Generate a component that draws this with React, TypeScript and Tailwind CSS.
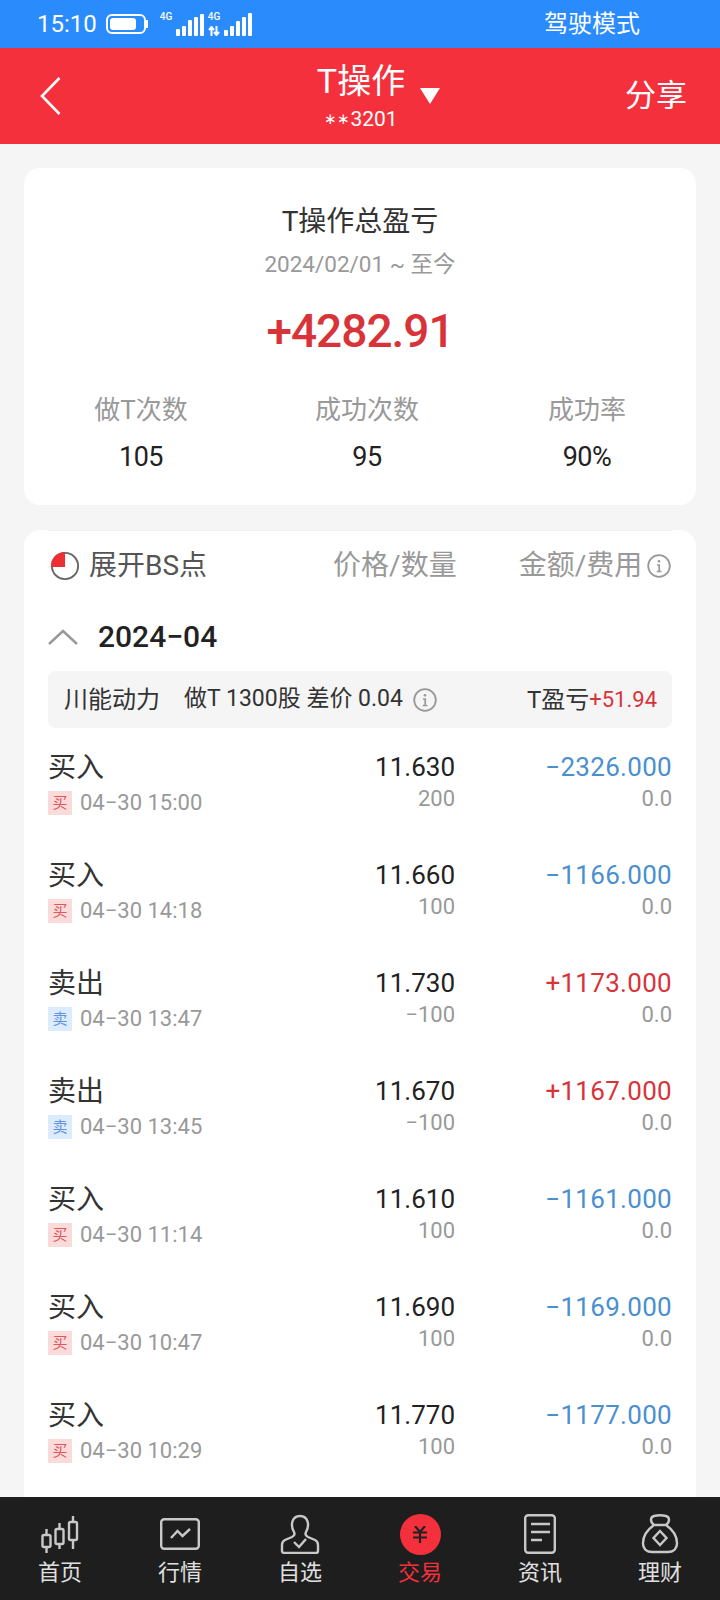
import React from "react";

const font = { fontFamily: 'Roboto, "Noto Sans CJK SC", sans-serif' };

const rows = [
  { t: "买入", d: "04−30 15:00", p: "11.630", q: "200", a: "−2326.000" },
  { t: "买入", d: "04−30 14:18", p: "11.660", q: "100", a: "−1166.000" },
  { t: "卖出", d: "04−30 13:47", p: "11.730", q: "−100", a: "+1173.000" },
  { t: "卖出", d: "04−30 13:45", p: "11.670", q: "−100", a: "+1167.000" },
  { t: "买入", d: "04−30 11:14", p: "11.610", q: "100", a: "−1161.000" },
  { t: "买入", d: "04−30 10:47", p: "11.690", q: "100", a: "−1169.000" },
  { t: "买入", d: "04−30 10:29", p: "11.770", q: "100", a: "−1177.000" },
];

function Info({ size, color }: { size: number; color: string }) {
  return (
    <svg width={size} height={size} viewBox="0 0 24 24" fill="none" stroke={color} strokeWidth="1.8">
      <circle cx="12" cy="12" r="10.8" />
      <circle cx="12" cy="7.2" r="1.3" fill={color} stroke="none" />
      <path d="M10 11h2.2v6.5M9.8 17.5h4.6" strokeWidth="1.7" />
    </svg>
  );
}

function Signal({ hs, dual }: { hs: number[]; dual?: boolean }) {
  return (
    <div className="flex h-[24px] items-end">
      <div className="flex h-[24px] w-[16px] flex-col justify-between">
        <span className="text-[10px] font-medium leading-[10px] text-white">4G</span>
        {dual && (
          <svg width="12" height="10" viewBox="0 0 12 10" fill="none" stroke="white" strokeWidth="2">
            <path d="M3.5 10V2M1 4l2.5-3L6 4M8.5 0v8M6 6l2.5 3L11 6" />
          </svg>
        )}
      </div>
      <div className="flex items-end gap-[2px]">
        {hs.map((h, i) => (
          <span key={i} className="w-[4px] rounded-[1px] bg-white" style={{ height: h }} />
        ))}
      </div>
    </div>
  );
}

function NavIcon({ k }: { k: number }) {
  const s = { fill: "none", stroke: "#c8c8c8", strokeWidth: 2.4 };
  if (k === 0)
    return (
      <svg width="38" height="37" viewBox="0 0 38 37" {...s}>
        <path d="M5.5 13v6M5.5 31v6M18.5 7v6M18.5 28v5M32 0v6M32 24v9" />
        <rect x="1.5" y="19" width="8" height="12" rx="1.5" />
        <rect x="14.5" y="13" width="8" height="15" rx="1.5" />
        <rect x="28" y="6" width="8" height="18" rx="1.5" />
      </svg>
    );
  if (k === 1)
    return (
      <svg width="40" height="32" viewBox="0 0 40 32" {...s}>
        <rect x="1.2" y="1.2" width="37.6" height="29.6" rx="3" />
        <path d="M11 20l6.5-7 5 5 7.5-7" />
      </svg>
    );
  if (k === 2)
    return (
      <svg width="40" height="40" viewBox="0 0 40 40" {...s}>
        <path d="M14 18c-4-7-2-16 6-16s10 9 6 16c-1 2 0 4 2 5l7 3c2 1 3 3 3 5v6c0 1-1 2-2 2H4c-1 0-2-1-2-2v-6c0-2 1-4 3-5l7-3c2-1 3-3 2-5z" />
        <path d="M14 28l5 5 7-8" />
      </svg>
    );
  if (k === 3)
    return (
      <div className="flex h-[41px] w-[41px] items-center justify-center rounded-full bg-[#f5303d]">
        <svg width="14" height="17" viewBox="0 0 14 17" fill="none" stroke="#222" strokeWidth="2.2">
          <path d="M2 0l5 6 5-6M0 6.5h14M0 11.5h14M7 6v11" />
        </svg>
      </div>
    );
  if (k === 4)
    return (
      <svg width="32" height="40" viewBox="0 0 32 40" {...s}>
        <rect x="1.2" y="1.2" width="29.6" height="37.6" rx="3" />
        <path d="M7 10h19M7 18h19M7 26h11" />
      </svg>
    );
  return (
    <svg width="38" height="40" viewBox="0 0 38 40" {...s}>
      <path d="M13 11c-4-3-4-8 0-9 4-1 8-1 12 0 4 1 4 6 0 9M13 11h12M13 11C6 16 2 22 2 29c0 6 4 9 9 9h16c5 0 9-3 9-9 0-7-4-13-11-18" />
      <path d="M19 17l6.5 7-6.5 7-6.5-7z" />
    </svg>
  );
}

export default function App() {
  return (
    <div className="relative flex h-[1600px] w-[720px] flex-col overflow-hidden bg-[#f5f5f5]" style={font}>
      <div className="flex h-[48px] shrink-0 items-center bg-[#2a8bfc] pl-[37px] pr-[80px] text-white">
        <span className="text-[24px] leading-none">15:10</span>
        <div className="ml-[9px] flex items-center">
          <div className="flex h-[20px] w-[40px] items-center rounded-[6px] border-2 border-white p-[2px]">
            <div className="h-full w-[26px] rounded-[3px] bg-white" />
          </div>
          <div className="h-[8px] w-[2px] bg-white" />
        </div>
        <div className="ml-[12px] flex gap-[4px]">
          <Signal hs={[7, 10, 16, 19, 22]} />
          <Signal hs={[6, 10, 15, 19, 23]} dual />
        </div>
        <span className="ml-auto text-[24px] leading-none">驾驶模式</span>
      </div>

      <div className="relative flex h-[96px] shrink-0 items-center justify-between bg-[#f4303c] pl-[40px] pr-[33px] text-white">
        <svg width="21" height="38" viewBox="0 0 21 38" fill="none" stroke="white" strokeWidth="2.6">
          <path d="M19.5 1L2 19l17.5 18" />
        </svg>
        <div className="absolute left-[317px] top-[11px] flex w-[88px] flex-col items-center">
          <span className="whitespace-nowrap text-[34px] leading-[44px]">T操作</span>
          <span className="mt-[3px] flex items-center whitespace-nowrap text-[21px] leading-[26px]">
            <span className="text-[15px]">∗∗</span>3201
          </span>
        </div>
        <svg className="absolute left-[420px] top-[40px]" width="20" height="16" viewBox="0 0 20 16" fill="white">
          <path d="M0 0h20L10 16z" />
        </svg>
        <span className="text-[31px]">分享</span>
      </div>

      <div className="mx-[24px] mt-[24px] flex h-[337px] shrink-0 flex-col items-center rounded-[16px] bg-white">
        <div className="mt-[34px] text-[28px] leading-[40px] text-[#333]">T操作总盈亏</div>
        <div className="mt-[6px] text-[22.5px] leading-[32px] text-[#999]">2024/02/01 ~ 至今</div>
        <div className="mt-[21px] text-[46px] font-medium leading-[60px] tracking-[-1px] text-[#d9333a]">+4282.91</div>
        <div className="mt-[29px] grid w-full grid-cols-[234px_218px_222px]">
          {[
            ["做T次数", "105"],
            ["成功次数", "95"],
            ["成功率", "90%"],
          ].map(([a, b]) => (
            <div key={a} className="flex flex-col items-center">
              <span className="text-[26px] leading-[40px] text-[#999]">{a}</span>
              <span className="mt-[7px] text-[27px] leading-[40px] tracking-[-0.5px] text-[#222]">{b}</span>
            </div>
          ))}
        </div>
      </div>

      <div className="mx-[24px] mt-[25px] flex-1 rounded-[16px] bg-white px-[24px]">
        <div className="h-px w-full bg-[#f0f0f0]" />
        <div className="flex h-[70px] items-center">
          <svg className="ml-[2px]" width="30" height="32" viewBox="0 0 32 32" fill="none">
            <circle cx="16" cy="16" r="14" stroke="#666" strokeWidth="2" />
            <path d="M16 1C7 1 1 8 1 17h15z" fill="#ee2e35" />
          </svg>
          <span className="ml-[9px] text-[28px] text-[#555]">展开BS点</span>
          <span className="ml-[126px] text-[28px] text-[#999]">价格/数量</span>
          <span className="ml-[62px] text-[28px] text-[#999]">金额/费用</span>
          <div className="ml-[5px]"><Info size={24} color="#999" /></div>
        </div>
        <div className="flex h-[72px] items-center">
          <svg width="30" height="16" viewBox="0 0 30 16" fill="none" stroke="#999" strokeWidth="2.4">
            <path d="M1 15L15 2l14 13" />
          </svg>
          <span className="ml-[20px] text-[30px] font-medium leading-none text-[#222]">2024−04</span>
        </div>
        <div className="-mt-[2px] flex h-[57px] items-center rounded-[8px] bg-[#f5f5f5] pl-[16px] pr-[15px] text-[#333]">
          <span className="text-[24px]">川能动力</span>
          <span className="ml-[24px] text-[23px]">做T 1300股 差价 0.04</span>
          <div className="ml-[10px]"><Info size={24} color="#999" /></div>
          <span className="ml-auto text-[24px]">T盈亏</span>
          <span className="text-[22px] text-[#d9333a]">+51.94</span>
        </div>
        <div className="mt-[5px] flex flex-col">
          {rows.map((r) => {
            const buy = r.t === "买入";
            return (
              <div key={r.d} className="flex h-[108px] shrink-0">
                <div className="flex flex-col pt-[16px]">
                  <span className="text-[28px] leading-[38px] text-[#333]">{r.t}</span>
                  <div className="flex items-center">
                    <span className={`flex h-[24px] w-[24px] items-center justify-center text-[15px] ${buy ? "bg-[#fbdada] text-[#e0565c]" : "bg-[#dcebfd] text-[#5f93dc]"}`}>
                      {buy ? "买" : "卖"}
                    </span>
                    <span className="ml-[8px] text-[22px] leading-[32px] text-[#999]">{r.d}</span>
                  </div>
                </div>
                <div className="ml-auto flex w-[200px] flex-col items-end pt-[15px]">
                  <span className="text-[26px] leading-[38px] text-[#222]">{r.p}</span>
                  <span className="text-[22px] leading-[26px] text-[#999]">{r.q}</span>
                </div>
                <div className="flex w-[217px] flex-col items-end pt-[15px]">
                  <span className={`text-[26px] leading-[38px] tracking-[0.3px] ${buy ? "text-[#4a8fd0]" : "text-[#d9333a]"}`}>{r.a}</span>
                  <span className="text-[22px] leading-[26px] text-[#999]">0.0</span>
                </div>
              </div>
            );
          })}
        </div>
      </div>

      <div className="absolute bottom-0 left-0 flex h-[103px] w-full items-stretch bg-[#1e1e1e]">
        {["首页", "行情", "自选", "交易", "资讯", "理财"].map((t, i) => (
          <div key={t} className="flex flex-1 flex-col items-center pt-[16px]">
            <div className="flex h-[42px] items-center justify-center"><NavIcon k={i} /></div>
            <span className={`mt-[3px] text-[22px] leading-[30px] ${i === 3 ? "text-[#f5303d]" : "text-[#e0e0e0]"}`}>{t}</span>
          </div>
        ))}
      </div>
    </div>
  );
}
